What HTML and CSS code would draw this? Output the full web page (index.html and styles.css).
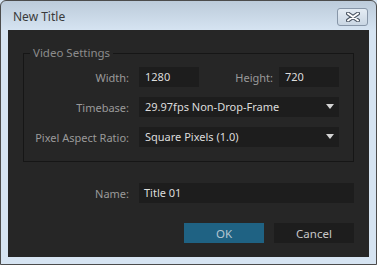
FILE: index.html
```html
<!DOCTYPE html>
<html>
  <head>
    <title>New Title</title>
    <link rel="stylesheet" href="styles.css">
  </head>
  <body>
    <div class="window">
      <div class="title-bar">
        <span class="title-text">New Title</span>
        <button class="close-button">
          <svg width="14" height="10" viewBox="0 0 14 10">
            <path d="M2 1.5 L12 8.5 M12 1.5 L2 8.5" stroke="#4a5563" stroke-width="4" stroke-linecap="round"/>
            <path d="M2 1.5 L12 8.5 M12 1.5 L2 8.5" stroke="#ffffff" stroke-width="2" stroke-linecap="round"/>
          </svg>
        </button>
      </div>

      <div class="content">
        <fieldset class="group">
          <legend class="group-title">Video Settings</legend>

          <div class="row">
            <span class="label">Width:</span>
            <span class="field small-field">1280</span>
            <span class="label height-label">Height:</span>
            <span class="field small-field">720</span>
          </div>

          <div class="row">
            <span class="label">Timebase:</span>
            <span class="field select-field">
              29.97fps Non-Drop-Frame
              <span class="arrow"></span>
            </span>
          </div>

          <div class="row">
            <span class="label">Pixel Aspect Ratio:</span>
            <span class="field select-field">
              Square Pixels (1.0)
              <span class="arrow"></span>
            </span>
          </div>
        </fieldset>

        <div class="row name-row">
          <span class="label name-label">Name:</span>
          <span class="field name-field">Title 01</span>
        </div>

        <div class="buttons">
          <button class="dialog-button ok-button">OK</button>
          <button class="dialog-button">Cancel</button>
        </div>
      </div>
    </div>
  </body>
</html>
```

FILE: styles.css
```css
body{
  margin: 0;
  font-family: "Noto Sans", "DejaVu Sans", sans-serif;
  background-color: #d6e4f2;
}

.window{
  width: 377px;
  height: 265px;
  box-sizing: border-box;
  border: 1px solid #4c4c4c;
  border-radius: 6px 6px 0 0;
  background: linear-gradient(#bccbda, #d6e4f2 30px);
  padding: 0 7px 7px 7px;
  display: flex;
  flex-direction: column;
}

.title-bar{
  height: 29px;
  display: flex;
  align-items: center;
  justify-content: space-between;
}

.title-text{
  font-size: 12px;
  color: #3a3a3a;
  margin-left: 5px;
  margin-top: 1px;
}

.close-button{
  width: 31px;
  height: 18px;
  margin-right: 1px;
  margin-top: 2px;
  padding: 0;
  border: 1px solid #8796a8;
  border-radius: 3px;
  background: linear-gradient(#e4ecf4, #c9d6e3);
  display: flex;
  align-items: center;
  justify-content: center;
}

.content{
  flex: 1;
  background-color: #262626;
  padding: 15px 15px 0 15px;
  font-size: 11px;
}

.group{
  margin: 0;
  padding: 0 14px 14px 0;
  border: 1px solid #161616;
}

.group-title{
  color: #8c8c8c;
  margin-left: 6px;
  padding: 0 3px;
  font-size: 11.5px;
  line-height: 16px;
}

.row{
  display: flex;
  align-items: center;
  height: 20px;
  margin-top: 10px;
}

.group .row:first-of-type{
  margin-top: 6px;
}

.label{
  width: 105px;
  text-align: right;
  margin-right: 10px;
  color: #9a9a9a;
}

.height-label{
  width: auto;
  flex: 1;
  margin-right: 6px;
}

.field{
  height: 20px;
  line-height: 20px;
  box-sizing: border-box;
  background-color: #1d1d1d;
  color: #dcdcdc;
  padding-left: 6px;
}

.small-field{
  width: 60px;
}

.select-field{
  width: 200px;
  position: relative;
}

.arrow{
  position: absolute;
  right: 5px;
  top: 7px;
  width: 0;
  height: 0;
  border-left: 4.5px solid transparent;
  border-right: 4.5px solid transparent;
  border-top: 5px solid #d4d4d4;
}

.name-row{
  margin-top: 21px;
}

.name-label{
  width: 106px;
}

.name-field{
  flex: 1;
  padding-left: 5px;
}

.buttons{
  display: flex;
  justify-content: flex-end;
  gap: 10px;
  margin-top: 20px;
}

.dialog-button{
  width: 80px;
  height: 20px;
  border: none;
  padding: 0;
  background-color: #1d1d1d;
  color: #c8c8c8;
  font-family: "Noto Sans", "DejaVu Sans", sans-serif;
  font-size: 11.5px;
}

.ok-button{
  background-color: #1f6283;
  color: #b4c6d2;
}
```
